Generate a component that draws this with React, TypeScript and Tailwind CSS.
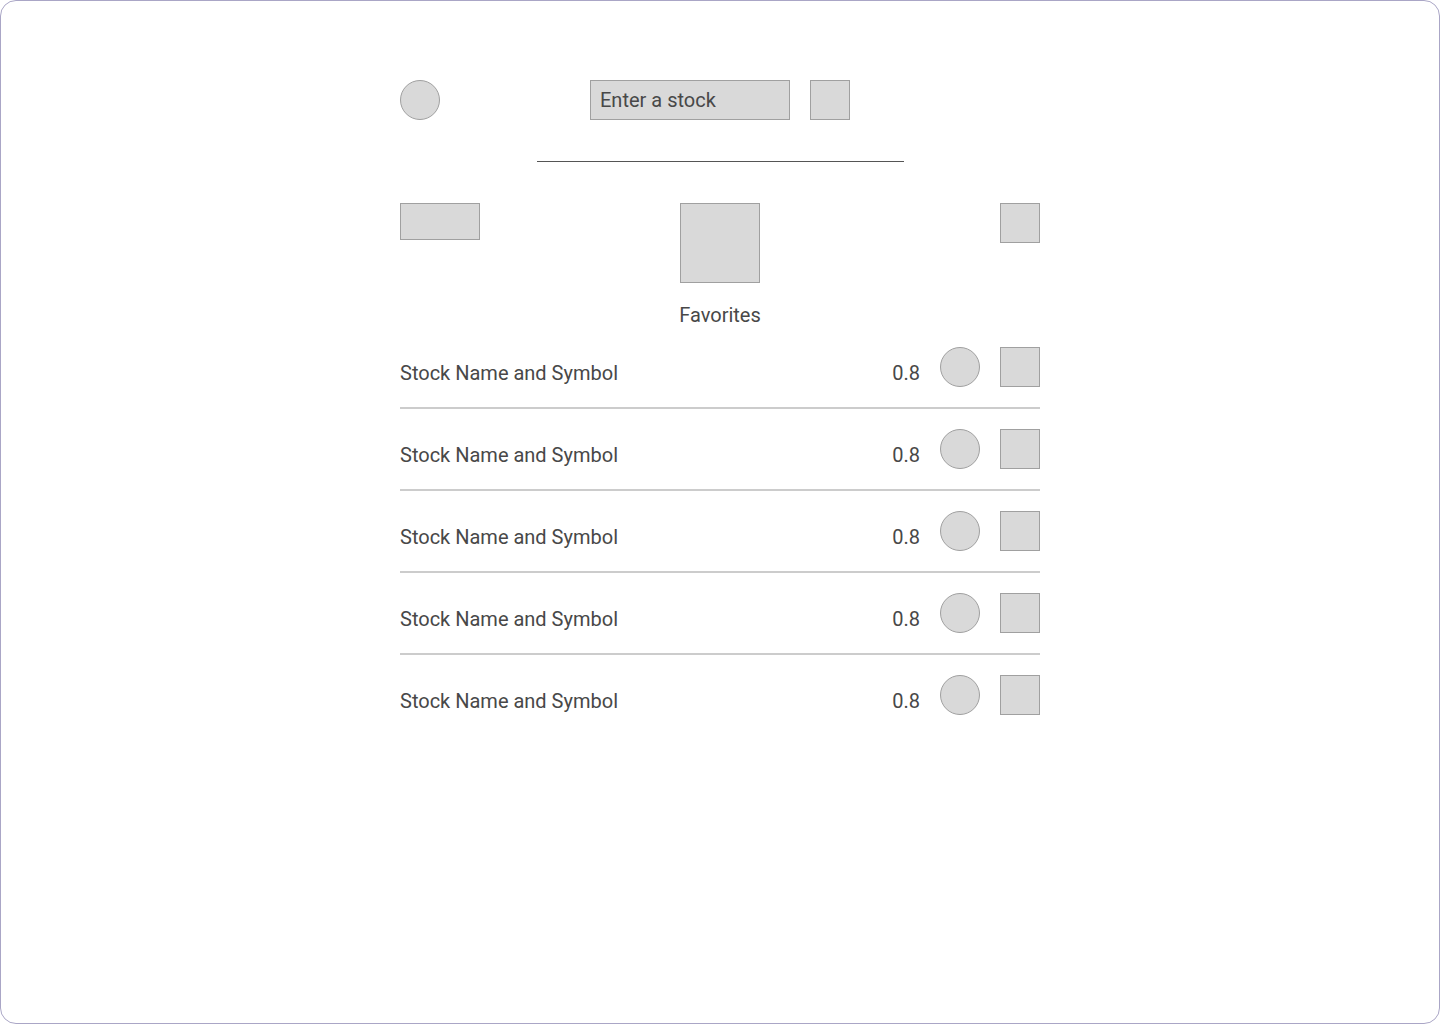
import React from "react";

const Circle = () => (
  <div className="w-10 h-10 rounded-full bg-[#d9d9d9] border border-[#a0a0a0] shrink-0" />
);
const Square = () => (
  <div className="w-10 h-10 bg-[#d9d9d9] border border-[#a0a0a0] shrink-0" />
);

export default function App() {
  const rows = [0, 1, 2, 3, 4];
  return (
    <div
      className="w-[1440px] h-[1024px] bg-white border border-[#aaa6c6] rounded-[16px] overflow-hidden text-[#484848]"
      style={{ fontFamily: "Roboto, 'Liberation Sans', sans-serif" }}
    >
      <div className="w-[640px] mx-auto pt-[79px] flex flex-col">
        <div className="flex justify-between items-center">
          <Circle />
          <div className="flex items-center gap-5">
            <div className="w-[200px] h-10 bg-[#d9d9d9] border border-[#a0a0a0] flex items-center pl-[9px] text-[20px]">
              Enter a stock
            </div>
            <Square />
          </div>
          <div className="w-10" />
        </div>
        <div className="mt-[41px] w-[367px] h-px bg-[#555555] self-center" />
        <div className="mt-[41px] grid grid-cols-3 items-start">
          <div className="w-20 h-[37px] bg-[#d9d9d9] border border-[#a0a0a0]" />
          <div className="justify-self-center w-20 h-20 bg-[#d9d9d9] border border-[#a0a0a0]" />
          <div className="justify-self-end">
            <Square />
          </div>
        </div>
        <div className="mt-[20px] text-center text-[20px] leading-[25px]">Favorites</div>
        <div className="mt-[19px] flex flex-col">
          {rows.map((i) => (
            <div key={i} className="flex flex-col">
              {i > 0 && <div className="h-[2px] bg-[#cccccc] my-[20px]" />}
              <div className="flex items-start h-10">
                <div className="flex-1 mt-[14px] text-[20px] leading-[24px]">Stock Name and Symbol</div>
                <div className="mt-[14px] text-[20px] leading-[24px] mr-5">0.8</div>
                <Circle />
                <div className="ml-5">
                  <Square />
                </div>
              </div>
            </div>
          ))}
        </div>
      </div>
    </div>
  );
}
